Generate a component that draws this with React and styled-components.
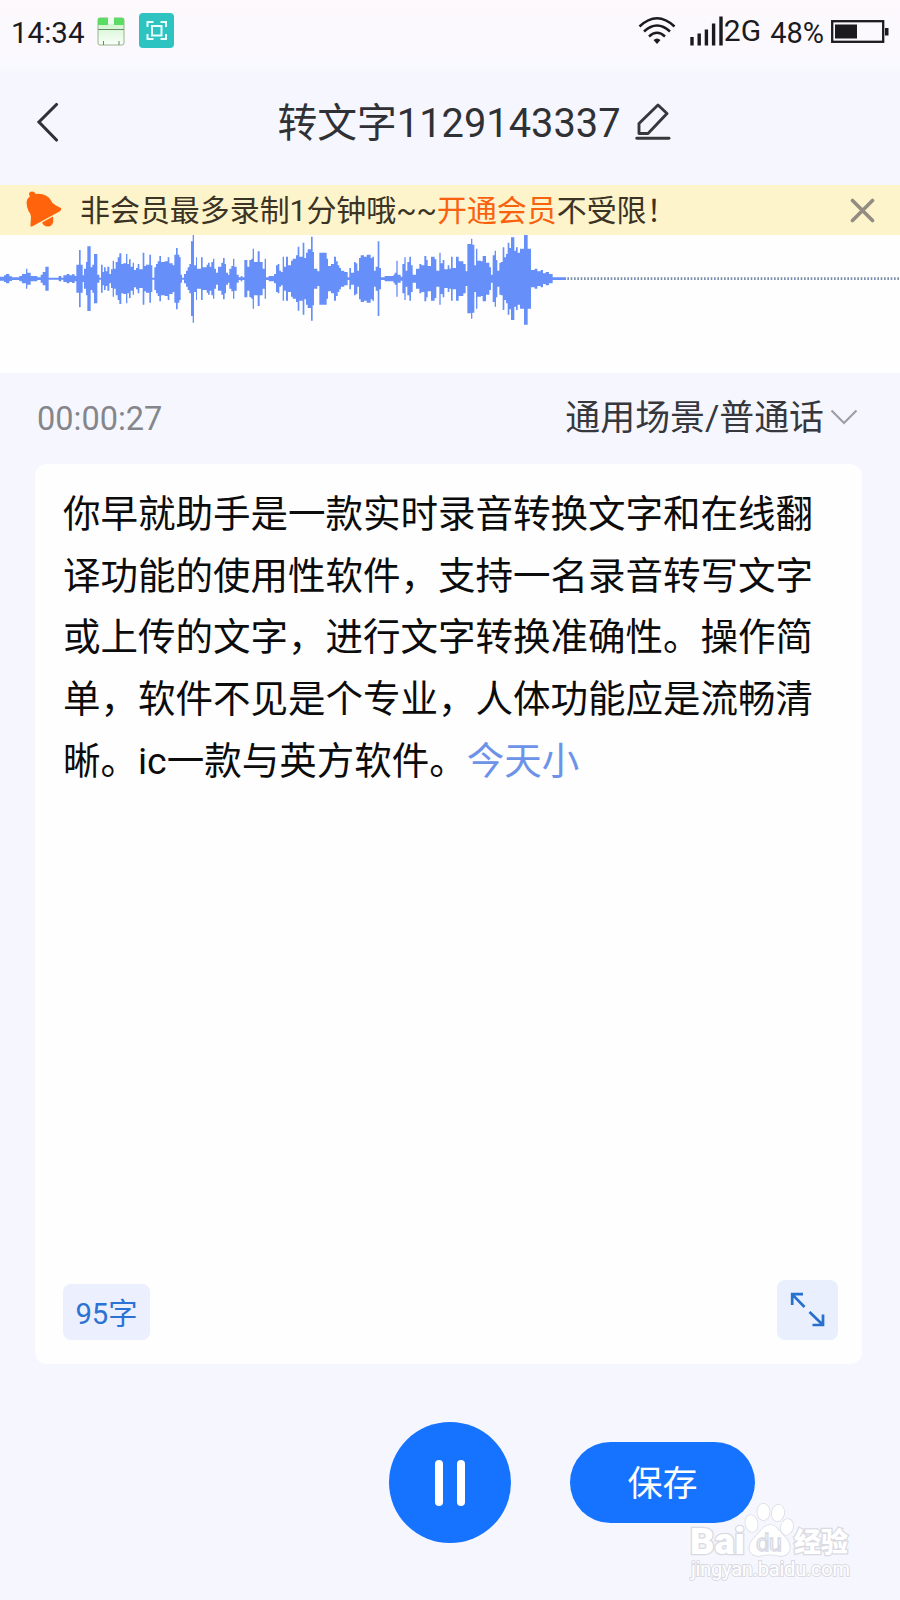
import React from 'react';
import styled, { createGlobalStyle } from 'styled-components';

const GlobalStyle = createGlobalStyle`
  * {
    box-sizing: border-box;
  }
  body {
    margin: 0;
    background: #f6f7fe;
    font-family: Roboto, 'Noto Sans CJK SC', sans-serif;
  }
`;

const Screen = styled.div`
  position: relative;
  display: flex;
  flex-direction: column;
  width: 900px;
  height: 1600px;
  overflow: hidden;
  background: linear-gradient(#fdf9fd 0, #fbf9fe 50px, #f6f7fe 75px);
`;

const StatusBar = styled.div`
  display: flex;
  justify-content: space-between;
  align-items: center;
  height: 62px;
  padding: 0 10px 0 11px;
  color: #1b1b1f;
`;

const StatusGroup = styled.div`
  display: flex;
  align-items: center;
`;

const StatusText = styled.span`
  font-size: ${(props) => props.size || 29}px;
  line-height: 34px;
  margin-top: ${(props) => props.drop || 0}px;
  margin-left: ${(props) => props.gap || 0}px;
`;

const Icon = styled.svg`
  display: block;
  flex: none;
  margin-left: ${(props) => props.$gap || 0}px;
  margin-bottom: ${(props) => props.$lift || 0}px;
`;

const Header = styled.div`
  display: grid;
  grid-template-columns: 1fr auto 1fr;
  align-items: center;
  height: 123px;
  padding: 0 36px;
`;

const Title = styled.div`
  display: flex;
  align-items: center;
  margin-left: 48px;
  color: #303135;
  font-size: 39.8px;
  line-height: 58px;
`;

const Notice = styled.div`
  display: flex;
  align-items: center;
  height: 50px;
  padding: 0 25px 0 26px;
  background: #fef4cb;
`;

const NoticeText = styled.span`
  flex: 1;
  margin-left: 18px;
  padding-top: 2px;
  color: #3b3324;
  font-size: 29.95px;
  line-height: 44px;
`;

const Highlight = styled.span`
  color: #f8620f;
`;

const WavePanel = styled.div`
  height: 138px;
  background: #fefeff;
`;

const MetaRow = styled.div`
  display: flex;
  justify-content: space-between;
  align-items: center;
  height: 91px;
  padding: 0 42px 0 37px;
`;

const Timer = styled.span`
  color: #85868b;
  font-size: 32.5px;
`;

const Scene = styled.div`
  display: flex;
  align-items: center;
  color: #37383d;
  font-size: 34.9px;
  line-height: 50px;
`;

const Card = styled.div`
  display: flex;
  flex-direction: column;
  justify-content: space-between;
  height: 900px;
  margin: 0 38px 0 35px;
  padding: 20px 24px 24px 28px;
  border-radius: 12px;
  background: #fefeff;
`;

const Transcript = styled.p`
  width: 756px;
  margin: 0;
  color: #0c0c0c;
  font-size: 37.5px;
  line-height: 61.7px;
`;

const Pending = styled.span`
  color: #6d93e9;
`;

const CardFooter = styled.div`
  display: flex;
  justify-content: space-between;
  align-items: flex-end;
`;

const CountTag = styled.div`
  display: flex;
  align-items: center;
  justify-content: center;
  width: 87px;
  height: 56px;
  padding-bottom: 2px;
  border-radius: 8px;
  background: #ebeffe;
  color: #2c71d4;
  font-size: 29.3px;
`;

const ExpandButton = styled.div`
  display: flex;
  align-items: center;
  justify-content: center;
  width: 61px;
  height: 60px;
  padding: 0 2px 2px 0;
  border-radius: 8px;
  background: #e9effd;
`;

const Actions = styled.div`
  display: flex;
  align-items: center;
  height: 121px;
  margin: 58px 0 0 389px;
`;

const PauseButton = styled.div`
  display: flex;
  align-items: center;
  justify-content: center;
  gap: 14px;
  width: 122px;
  height: 121px;
  border-radius: 50%;
  background: #1673ff;
`;

const PauseBar = styled.span`
  width: 8px;
  height: 46px;
  border-radius: 4px;
  background: #fff;
`;

const SaveButton = styled.div`
  display: flex;
  align-items: center;
  justify-content: center;
  width: 185px;
  height: 81px;
  margin-left: 59px;
  padding-bottom: 4px;
  border-radius: 41px;
  background: #1673ff;
  color: #fff;
  font-size: 35px;
`;

const Watermark = styled.svg`
  position: absolute;
  right: 39px;
  bottom: 14px;
`;

// [x, half height] steps, three units per pixel
const samples = [
  [0, 6], [12, 10], [18, 14], [28, 7], [36, 4], [58, 8], [66, 14], [78, 30], [82, 18], [92, 8],
  [112, 4], [122, 12], [128, 20], [136, 36], [146, 3], [176, 8], [184, 3], [190, 10], [200, 14], [208, 10],
  [216, 13], [224, 8], [229, 42], [237, 86], [242, 42], [248, 10], [252, 30], [258, 50], [262, 97], [272, 34],
  [277, 42], [282, 74], [292, 12], [298, 3], [303, 42], [308, 20], [312, 34], [317, 22], [322, 36], [328, 14],
  [333, 28], [338, 54], [342, 30], [347, 50], [353, 64], [358, 76], [364, 44], [370, 46], [378, 74], [382, 44],
  [387, 58], [392, 36], [398, 48], [402, 26], [408, 32], [413, 44], [418, 28], [428, 78], [433, 38], [438, 42],
  [448, 72], [453, 40], [457, 3], [463, 34], [468, 44], [473, 52], [478, 68], [483, 50], [494, 52], [503, 64],
  [508, 46], [518, 40], [523, 72], [528, 92], [533, 72], [538, 64], [542, 12], [546, 3], [552, 14], [558, 24],
  [563, 34], [568, 44], [573, 112], [578, 132], [582, 40], [588, 64], [591, 30], [603, 64], [608, 34], [620, 42],
  [624, 48], [629, 36], [634, 50], [639, 60], [643, 30], [648, 18], [654, 36], [664, 48], [669, 62], [674, 44],
  [678, 18], [684, 12], [688, 30], [694, 38], [699, 60], [703, 36], [710, 12], [716, 4], [722, 8], [727, 4],
  [733, 56], [742, 36], [748, 56], [754, 60], [758, 90], [762, 50], [768, 50], [773, 82], [779, 50], [788, 30],
  [794, 60], [798, 4], [806, 8], [822, 14], [828, 40], [833, 44], [838, 24], [843, 20], [848, 66], [852, 36],
  [858, 66], [864, 40], [873, 54], [878, 60], [888, 70], [893, 96], [898, 66], [908, 108], [913, 62], [918, 78],
  [923, 88], [933, 126], [938, 80], [942, 30], [952, 22], [958, 78], [980, 60], [984, 38], [993, 44], [1002, 66],
  [1008, 52], [1013, 40], [1018, 32], [1023, 24], [1033, 20], [1043, 4], [1048, 32], [1053, 18], [1062, 50], [1067, 46],
  [1072, 24], [1077, 62], [1082, 70], [1092, 66], [1100, 72], [1112, 62], [1117, 66], [1122, 24], [1127, 36], [1133, 112],
  [1138, 32], [1143, 4], [1154, 8], [1180, 12], [1184, 18], [1189, 54], [1193, 12], [1202, 6], [1207, 44], [1213, 64],
  [1217, 24], [1222, 50], [1228, 66], [1233, 40], [1238, 12], [1248, 30], [1258, 44], [1264, 40], [1273, 68], [1279, 56],
  [1283, 38], [1293, 66], [1304, 58], [1309, 24], [1318, 78], [1322, 46], [1328, 56], [1333, 28], [1343, 40], [1348, 30],
  [1353, 66], [1358, 32], [1368, 66], [1376, 52], [1390, 44], [1397, 22], [1402, 104], [1413, 120], [1417, 102], [1423, 40],
  [1428, 90], [1432, 54], [1443, 52], [1448, 68], [1458, 48], [1468, 34], [1473, 12], [1478, 70], [1484, 84], [1488, 56],
  [1492, 24], [1498, 48], [1503, 50], [1508, 94], [1513, 64], [1518, 74], [1523, 108], [1528, 92], [1533, 124], [1543, 84],
  [1548, 94], [1553, 78], [1560, 90], [1572, 138], [1583, 90], [1593, 26], [1604, 30], [1612, 22], [1622, 26], [1629, 16],
  [1637, 20], [1647, 14], [1658, 4], [1698, 0],
];

const wavePath = () => {
  const middle = 131;
  const top = samples.map(([x, h], i) => {
    const next = samples[i + 1] ? samples[i + 1][0] : x;
    return `L${x} ${middle - h}H${next}`;
  });
  const bottom = samples.map(([x, h], i) => {
    const next = samples[i + 1] ? samples[i + 1][0] : x;
    return `L${next} ${middle + h}H${x}`;
  }).reverse();
  return `M0 ${middle}${top.join('')}${bottom.join('')}Z`;
};

const Waveform = () => (
  <svg width="900" height="138" viewBox="0 0 2700 414" display="block">
    <path d={wavePath()} fill="#668ffa" />
    <path d="M1702 131H2700" stroke="#7b8fab" strokeWidth="8" strokeDasharray="5 5" />
  </svg>
);

const CalendarIcon = () => (
  <Icon $gap={13} width="28" height="29" viewBox="0 0 28 29">
    <defs>
      <linearGradient id="sheet" x2="0" y2="1">
        <stop offset="0" stopColor="#c4f2c3" />
        <stop offset="1" stopColor="#fbfffb" />
      </linearGradient>
    </defs>
    <rect x="1" y="1" width="26" height="27" rx="2" fill="url(#sheet)" stroke="#9ab58a" />
    <path d="M1 1h10v7H1zM17 1h10v7H17z" fill="#5bdc63" />
    <path d="M11 0h6v7h-6z" fill="#effcef" />
    <path d="M1 12.500h26" stroke="#658b62" />
    <path d="M6.500 24v4M22 24v4" stroke="#658b62" />
  </Icon>
);

const ScanIcon = () => (
  <Icon $gap={14} $lift={1} width="35" height="35" viewBox="0 0 35 35">
    <rect width="35" height="35" rx="4" fill="#2dc3c1" />
    <g fill="none" stroke="#eaffff" strokeWidth="2">
      <path d="M8.500 14V9h6M21.500 9h5.500v5M27 21v5h-5.500M14.500 26h-6v-5" />
      <rect x="13" y="13" width="9.500" height="9.500" />
    </g>
  </Icon>
);

const WifiIcon = () => (
  <Icon $lift={1} width="38" height="30" viewBox="0 0 38 30">
    <g fill="none" stroke="#1b1b1f" strokeWidth="2.500">
      <path d="M1.500 10.500Q19-6 36.500 10.500" />
      <path d="M6 15.500Q19 3.500 32 15.500" />
      <path d="M11 20.500Q19 13 27 20.500" />
    </g>
    <path d="M15.500 24q3.500-3 7 0L19 28z" fill="#1b1b1f" />
  </Icon>
);

const SignalIcon = () => (
  <Icon $gap={14} width="33" height="30" viewBox="0 0 33 30">
    <path
      d="M2 29.500V21M9.200 29.500V17.500M16.400 29.500V13.500M23.600 29.500V7.500M31 29.500V.5"
      stroke="#1b1b1f"
      strokeWidth="3.400"
    />
  </Icon>
);

const BatteryIcon = () => (
  <Icon $gap={7} width="59" height="23" viewBox="0 0 59 23">
    <rect x="1.200" y="1.200" width="51" height="20.600" fill="none" stroke="#1b1b1f" strokeWidth="2.300" />
    <path d="M4 4.500h22v14H4zM54 8h3.500v7.500H54z" fill="#1b1b1f" />
  </Icon>
);

const BackIcon = () => (
  <Icon $lift={3} width="24" height="40" viewBox="0 0 24 40">
    <path d="M20.500 2.500L3 20L20.500 38" fill="none" stroke="#303135" strokeWidth="3.100" strokeLinecap="round" />
  </Icon>
);

const EditIcon = () => (
  <Icon $gap={14} $lift={4} width="36" height="37" viewBox="0 0 36 37">
    <g fill="none" stroke="#37383c" strokeWidth="2.900" strokeLinecap="round" strokeLinejoin="round">
      <path d="M4 20.500L23 2L32 10.500L13 30.500H4z" />
      <path d="M1.800 35.200H34" />
    </g>
  </Icon>
);

const BellIcon = () => (
  <Icon $lift={2} width="36" height="36" viewBox="0 0 36 36">
    <path
      d="M3 3.500Q3 .5 6 .5Q9 .5 9.500 3Q20 1.500 25 9.500Q26 12.500 30 14.500L35 17Q36 19 33.500 20.500L6 35.500Q4 36 4.500 33.500L5 26Q5 23 2.500 20Q-2 9 4 5.500z"
      fill="#ff640c"
    />
    <path d="M16 31.500L27 25.500Q28.500 34.500 22.500 35.500Q18 36 16 31.500z" fill="#ff640c" />
  </Icon>
);

const CloseIcon = () => (
  <Icon width="25" height="25" viewBox="0 0 25 25">
    <path d="M2.500 2.500L22.500 22.500M22.500 2.500L2.500 22.500" stroke="#928c83" strokeWidth="3.600" strokeLinecap="round" />
  </Icon>
);

const ChevronIcon = () => (
  <Icon $gap={6} $lift={4} width="28" height="18" viewBox="0 0 28 18">
    <path d="M1.500 2.500L14 15L26.500 2.500" fill="none" stroke="#9da0a6" strokeWidth="2.200" />
  </Icon>
);

const ExpandIcon = () => (
  <svg width="36" height="36" viewBox="0 0 36 36">
    <g fill="none" stroke="#2870cd" strokeWidth="2.700">
      <path d="M14 3.200H3.200V14M3.200 3.400L15.500 16" />
      <path d="M23.500 34H34V23.500M34 34L20.500 21" />
    </g>
  </svg>
);

const BaiduMark = () => (
  <Watermark width="172" height="84" viewBox="0 0 172 84">
    <g fill="#fff" stroke="#d9dae3" strokeWidth="1.400" paintOrder="stroke">
      <ellipse cx="62.500" cy="21.500" rx="6" ry="8.500" transform="rotate(-12 62.500 21.500)" />
      <ellipse cx="74.500" cy="10" rx="6.200" ry="8.300" />
      <ellipse cx="89" cy="11" rx="6.200" ry="8.300" transform="rotate(10 89 11)" />
      <ellipse cx="98" cy="25" rx="6" ry="8" transform="rotate(15 98 25)" />
      <path d="M81 23C88 23 91 31 97 36C105 46 99 56 89 53.500Q81 51.500 73 53.500C62 56 57 47 63 38.500C71 31 74 23 81 23z" />
    </g>
    <g fill="#fff" stroke="#d9dae3" fontFamily="Roboto, 'Noto Sans CJK SC', sans-serif">
      <text x="1" y="52" fontSize="36" fontWeight="900" strokeWidth="2.600" paintOrder="stroke" textLength="55" lengthAdjust="spacingAndGlyphs">Bai</text>
      <text x="67" y="49" fontSize="24" strokeWidth="1.400" textLength="26">du</text>
      <text x="105" y="50" fontSize="27" fontWeight="900" strokeWidth="2.600" paintOrder="stroke">经验</text>
      <text x="2" y="74" fontSize="20" strokeWidth="2" paintOrder="stroke" textLength="159">jingyan.baidu.com</text>
    </g>
  </Watermark>
);

const App = () => (
  <>
    <GlobalStyle />
    <Screen>
      <StatusBar>
        <StatusGroup>
          <StatusText size={29.5} drop={4}>14:34</StatusText>
          <CalendarIcon />
          <ScanIcon />
        </StatusGroup>
        <StatusGroup>
          <WifiIcon />
          <SignalIcon />
          <StatusText size={30} gap={1}>2G</StatusText>
          <StatusText size={29} drop={4} gap={9}>48%</StatusText>
          <BatteryIcon />
        </StatusGroup>
      </StatusBar>
      <Header>
        <BackIcon />
        <Title>
          转文字1129143337
          <EditIcon />
        </Title>
      </Header>
      <Notice>
        <BellIcon />
        <NoticeText>
          非会员最多录制1分钟哦~~<Highlight>开通会员</Highlight>不受限！
        </NoticeText>
        <CloseIcon />
      </Notice>
      <WavePanel>
        <Waveform />
      </WavePanel>
      <MetaRow>
        <Timer>00:00:27</Timer>
        <Scene>
          通用场景/普通话
          <ChevronIcon />
        </Scene>
      </MetaRow>
      <Card>
        <Transcript>
          你早就助手是一款实时录音转换文字和在线翻译功能的使用性软件，支持一名录音转写文字或上传的文字，进行文字转换准确性。操作简单，软件不见是个专业，人体功能应是流畅清晰。ic一款与英方软件。<Pending>今天小</Pending>
        </Transcript>
        <CardFooter>
          <CountTag>95字</CountTag>
          <ExpandButton><ExpandIcon /></ExpandButton>
        </CardFooter>
      </Card>
      <Actions>
        <PauseButton>
          <PauseBar />
          <PauseBar />
        </PauseButton>
        <SaveButton>保存</SaveButton>
      </Actions>
      <BaiduMark />
    </Screen>
  </>
);

export default App;
